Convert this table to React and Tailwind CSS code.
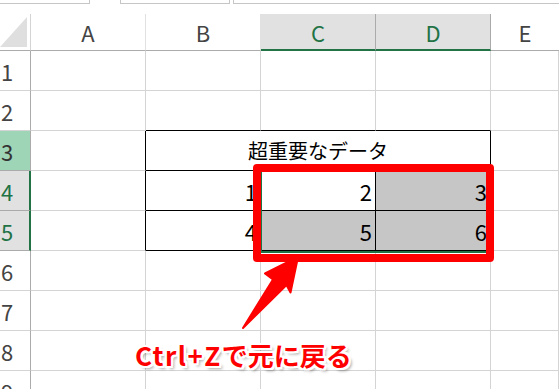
import React from 'react';

const font = "font-['Noto_Sans_CJK_JP','Noto_Sans',sans-serif]";

// column header strip: A..E
const headers = [
  { label: 'A', active: false },
  { label: 'B', active: false },
  { label: 'C', active: true },
  { label: 'D', active: true },
];

const RowHead = ({ n, kind }) => {
  let cls = 'bg-white text-[#444] border-r border-b border-[#ababab] border-b-[#d4d4d4]';
  if (kind === 'full') cls = 'bg-[#9fd5b7] text-[#333] border-r border-b border-[#ababab]';
  if (kind === 'part') cls = 'bg-[#e1e1e1] text-[#217346] border-r-2 border-b border-r-[#217346] border-b-[#ababab]';
  return (
    <div className={`w-[31px] h-full shrink-0 flex items-center pl-[1px] text-[22px] leading-none ${cls}`}>
      {n}
    </div>
  );
};

const Cell = ({ w = 'w-[115px]', className = '', children }) => (
  <div className={`${w} h-full shrink-0 border-r border-b border-[#d4d4d4] ${className}`}>{children}</div>
);

const Num = ({ children }) => (
  <div className="h-full flex items-center justify-end pr-[3px] text-[22px] leading-none text-black">{children}</div>
);

const PlainRow = ({ n, bottomBlack }) => (
  <div className="flex h-[40px]">
    <RowHead n={n} />
    <Cell />
    <Cell className={bottomBlack ? 'border-b-black' : ''} />
    <Cell className={bottomBlack ? 'border-b-black' : ''} />
    <Cell className={bottomBlack ? 'border-b-black' : ''} />
    <Cell w="flex-1" />
  </div>
);

const DataRow = ({ n, values, fills }) => (
  <div className="flex h-[40px]">
    <RowHead n={n} kind="part" />
    <Cell className="border-r-black" />
    <Cell className="border-r-black border-b-black"><Num>{values[0]}</Num></Cell>
    <Cell className={`border-r-black border-b-black ${fills[0] ? 'bg-[#c6c6c6]' : 'bg-white'}`}><Num>{values[1]}</Num></Cell>
    <Cell className={`border-r-black border-b-black ${fills[1] ? 'bg-[#c6c6c6]' : 'bg-white'}`}><Num>{values[2]}</Num></Cell>
    <Cell w="flex-1" />
  </div>
);

export default function App() {
  return (
    <div className={`relative w-[559px] h-[389px] overflow-hidden bg-white ${font}`}>
      {/* name box / formula bar edges */}
      <div className="flex h-[14px]">
        <div className="w-[90px] h-[4px] border-r border-b border-[#c6c6c6]" />
        <div className="ml-[30px] w-[110px] h-[4px] border-x border-b border-[#c6c6c6]" />
        <div className="ml-[3px] flex-1 h-[4px] border-l border-b border-[#c6c6c6]" />
      </div>

      {/* column headers */}
      <div className="flex h-[37px]">
        <div className="w-[31px] shrink-0 h-full border-r border-b border-[#d4d4d4] border-b-[#ababab] relative">
          <div className="absolute left-0 top-[3px] w-[27px] h-[30px] bg-[#dfdfdf] [clip-path:polygon(100%_0,100%_100%,0_100%)]" />
        </div>
        {headers.map(h => (
          <div
            key={h.label}
            className={`w-[115px] shrink-0 h-full flex items-center justify-center text-[22px] leading-none border-r ${
              h.active
                ? 'bg-[#e1e1e1] text-[#217346] border-r-[#ababab] border-b-2 border-b-[#217346]'
                : 'text-[#444] border-r-[#e1e1e1] border-b border-b-[#ababab]'
            }`}
          >
            {h.label}
          </div>
        ))}
        <div className="flex-1 h-full flex items-center justify-center text-[22px] leading-none text-[#444] border-b border-[#ababab]">E</div>
      </div>

      {/* sheet body */}
      <PlainRow n={1} />
      <PlainRow n={2} bottomBlack />
      <div className="flex h-[40px]">
        <RowHead n={3} kind="full" />
        <Cell className="border-r-black" />
        <Cell w="w-[345px]" className="border-r-black border-b-black flex items-center justify-center text-[20px] leading-none text-black">
          超重要なデータ
        </Cell>
        <Cell w="flex-1" />
      </div>
      <DataRow n={4} values={[1, 2, 3]} fills={[false, true]} />
      <DataRow n={5} values={[4, 5, 6]} fills={[true, true]} />
      <PlainRow n={6} />
      <PlainRow n={7} />
      <PlainRow n={8} />
      <PlainRow n={9} />

      {/* selection outline C4:D5 */}
      <div className="absolute left-[260px] top-[170px] w-[231px] h-[83px] border-2 border-[#217346] pointer-events-none" />

      {/* callout box + arrow */}
      <div className="absolute left-[253px] top-[164px] w-[241px] h-[98px] border-[8px] border-[#ff0000] rounded-[4px] pointer-events-none" />
      <svg className="absolute left-0 top-0 pointer-events-none" width="559" height="389" viewBox="0 0 559 389">
        <polygon
          points="243,328 273,279.5 265,273.5 298,257 290.5,292.5 286.5,285"
          fill="#ff0000"
          stroke="#ff0000"
          strokeWidth="2"
          strokeLinejoin="round"
        />
      </svg>

      <div className="absolute left-[135px] top-[342px] text-[26px] font-bold leading-none text-[#ff0000] whitespace-nowrap [text-shadow:2px_0_0_#fff,-2px_0_0_#fff,0_2px_0_#fff,0_-2px_0_#fff,2px_2px_0_#fff,-2px_-2px_0_#fff,2px_-2px_0_#fff,-2px_2px_0_#fff,3px_3px_3px_rgba(0,0,0,0.35)]">
        <span className="tracking-[1.5px]">Ctrl+Z</span>で元に戻る
      </div>
    </div>
  );
}
